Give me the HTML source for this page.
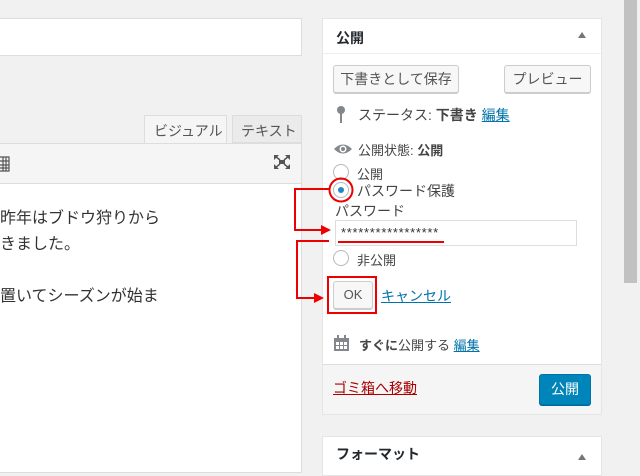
<!DOCTYPE html>
<html><head><meta charset="utf-8"><style>
*{margin:0;padding:0;box-sizing:border-box}
body{width:640px;height:466px;overflow:hidden;background:#f1f1f1;position:relative;font-family:"Liberation Sans","Noto Sans CJK JP",sans-serif;font-size:13px;color:#444}
.a{position:absolute}
a{color:#0073aa;text-decoration:underline}
.btn{position:absolute;background:#f7f7f7;border:1px solid #ccc;border-radius:3px;box-shadow:0 1px 0 #ccc;color:#555;font-size:13px;text-align:center}
.radio{position:absolute;width:16px;height:16px;border:1px solid #b4b9be;border-radius:50%;background:#fff}
</style></head><body>
<div class="a" style="left:-2px;top:18px;width:304px;height:38px;background:#fff;border:1px solid #ddd"></div>
<div class="a" style="left:144px;top:115px;width:83px;height:29px;background:#f5f5f5;border:1px solid #ddd;border-bottom:none;font-size:14px;color:#555;padding:5px 0 0 9px">ビジュアル</div>
<div class="a" style="left:232px;top:115px;width:70px;height:28px;background:#ebebeb;border:1px solid #ddd;font-size:14px;color:#555;padding:5px 0 0 8px">テキスト</div>
<div class="a" style="left:-2px;top:143px;width:304px;height:330px;background:#fff;border:1px solid #ddd"></div>
<div class="a" style="left:-1px;top:144px;width:302px;height:40px;background:#f5f5f5;border-bottom:1px solid #ddd"></div>
<svg class="a" style="left:0;top:156px" width="10" height="16"><path d="M0 1H9V15H0M0 5H9M0 9H9M0 12H9M3 1V15M6 1V15" fill="none" stroke="#555" stroke-width="1.2"/></svg>
<svg class="a" style="left:274px;top:155px" width="16" height="14"><path d="M0 0L5 0L0 5ZM16 0L11 0L16 5ZM0 14L5 14L0 9ZM16 14L11 14L16 9Z" fill="#555"/><rect x="5" y="5" width="6" height="4" fill="#555"/><path d="M1 1L6 5M15 1L10 5M1 13L6 9M15 13L10 9" stroke="#555" stroke-width="1.5"/></svg>
<div class="a" style="left:0;top:206px;font-size:16px;line-height:26px;color:#333">昨年はブドウ狩りから<br>きました。<br><br>置いてシーズンが始ま</div>

<div class="a" style="left:623px;top:0;width:17px;height:466px;background:#f1f1f1"></div>
<div class="a" style="left:624px;top:0;width:13px;height:283px;background:#c1c1c1"></div>

<div class="a" style="left:322px;top:18px;width:280px;height:397px;background:#fff;border:1px solid #e5e5e5"></div>
<div class="a" style="left:323px;top:19px;width:278px;height:35px;border-bottom:1px solid #eee"></div>
<div class="a" style="left:336px;top:28px;font-size:14px;font-weight:bold;color:#23282d">公開</div>
<div class="a" style="left:578px;top:32px;width:0;height:0;border-left:4px solid transparent;border-right:4px solid transparent;border-bottom:6px solid #72777c"></div>
<div class="btn" style="left:333px;top:65px;width:126px;height:28px;line-height:26px;font-size:14px">下書きとして保存</div>
<div class="btn" style="left:504px;top:65px;width:87px;height:28px;line-height:26px;font-size:14px">プレビュー</div>
<svg class="a" style="left:336px;top:106px" width="10" height="18"><circle cx="5" cy="4" r="4" fill="#82878c"/><rect x="4" y="6" width="2" height="11" fill="#82878c"/></svg>
<div class="a" style="left:358px;top:105px;font-size:14px;color:#444">ステータス: <b>下書き</b> <a>編集</a></div>
<svg class="a" style="left:333px;top:142px" width="20" height="14"><path d="M1 7Q10-2 19 7Q10 16 1 7Z" fill="#82878c"/><circle cx="10" cy="7" r="3.5" fill="#fff"/><circle cx="10" cy="7" r="2" fill="#82878c"/></svg>
<div class="a" style="left:358px;top:140px;font-size:13px">公開状態: <b>公開</b></div>
<div class="radio" style="left:333px;top:164px"></div>
<div class="a" style="left:357px;top:164px;font-size:13px">公開</div>
<div class="radio" style="left:333px;top:182px"><div style="position:absolute;left:4px;top:4px;width:6px;height:6px;border-radius:50%;background:#1e8cbe"></div></div>
<div class="a" style="left:357px;top:181px;font-size:14px">パスワード保護</div>
<div class="a" style="left:335px;top:201px;font-size:14px">パスワード</div>
<div class="a" style="left:335px;top:220px;width:242px;height:26px;border:1px solid #ddd;background:#fff;font-size:13px;padding:4px 0 0 5px;color:#333;letter-spacing:0.7px">*****************</div>
<div class="radio" style="left:333px;top:250px"></div>
<div class="a" style="left:357px;top:250px;font-size:13px">非公開</div>
<div class="btn" style="left:333px;top:281px;width:40px;height:28px;line-height:26px">OK</div>
<div class="a" style="left:381px;top:286px;font-size:14px"><a>キャンセル</a></div>
<svg class="a" style="left:333px;top:335px" width="17" height="17"><rect x="1" y="3" width="15" height="13" fill="#82878c"/><rect x="3" y="7" width="3" height="3" fill="#fff"/><rect x="7" y="7" width="3" height="3" fill="#fff"/><rect x="11" y="7" width="3" height="3" fill="#fff"/><rect x="3" y="11" width="3" height="3" fill="#fff"/><rect x="7" y="11" width="3" height="3" fill="#fff"/><rect x="11" y="11" width="3" height="3" fill="#fff"/><rect x="4" y="0" width="2" height="4" fill="#82878c"/><rect x="11" y="0" width="2" height="4" fill="#82878c"/></svg>
<div class="a" style="left:359px;top:335px;font-size:13px;color:#444"><b style="font-weight:bold">すぐに</b>公開する <a>編集</a></div>
<div class="a" style="left:323px;top:364px;width:278px;height:50px;background:#f5f5f5;border-top:1px solid #ddd"></div>
<div class="a" style="left:333px;top:378px;font-size:14px"><a style="color:#a00">ゴミ箱へ移動</a></div>
<div class="a" style="left:539px;top:374px;width:52px;height:31px;background:#0085ba;border:1px solid #0073aa;border-radius:3px;box-shadow:0 1px 0 #006799;color:#fff;font-size:14px;text-align:center;line-height:28px">公開</div>

<div class="a" style="left:322px;top:436px;width:280px;height:40px;background:#fff;border:1px solid #e5e5e5"></div>
<div class="a" style="left:336px;top:444px;font-size:14px;font-weight:bold;color:#23282d">フォーマット</div>
<div class="a" style="left:578px;top:454px;width:0;height:0;border-left:4px solid transparent;border-right:4px solid transparent;border-bottom:6px solid #72777c"></div>

<svg class="a" style="left:0;top:0" width="640" height="466">
<g fill="none" stroke="#e00" stroke-width="2">
<circle cx="341" cy="190" r="11.5"/>
<path d="M329 189H295V230H322"/>
<path d="M338 242H444"/>
<path d="M329 241H297V298H316"/>
<rect x="328" y="277" width="48" height="36"/>
</g>
<path d="M321 225L331 230L321 235Z" fill="#e00"/>
<path d="M314 293L324 298L314 303Z" fill="#e00"/>
</svg>
</body></html>
